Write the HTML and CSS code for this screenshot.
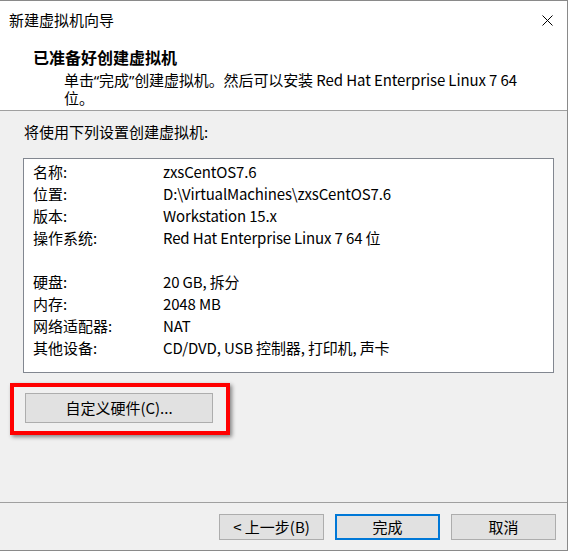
FILE: index.html
```html
<!DOCTYPE html>
<html lang="zh-CN">
<head>
<meta charset="utf-8">
<title>新建虚拟机向导</title>
<link rel="stylesheet" href="styles.css">
</head>
<body>
<div class="window">
  <div class="titlebar">
    <span class="title">新建虚拟机向导</span>
    <svg class="close" width="11" height="11" viewBox="0 0 11 11"><path d="M0.5 0.5 L10.5 10.5 M10.5 0.5 L0.5 10.5" stroke="#000" stroke-width="1" fill="none"/></svg>
  </div>
  <div class="header">
    <div class="heading">已准备好创建虚拟机</div>
    <div class="subtitle">单击<span class="q">“</span>完成<span class="q">”</span>创建虚拟机。然后可以安装 Red Hat Enterprise Linux 7 64<br>位。</div>
  </div>
  <div class="body">
    <div class="intro">将使用下列设置创建虚拟机:</div>
    <div class="listbox">
      <div class="row"><span class="label">名称:</span><span class="value">zxsCentOS7.6</span></div>
      <div class="row"><span class="label">位置:</span><span class="value">D:\VirtualMachines\zxsCentOS7.6</span></div>
      <div class="row"><span class="label">版本:</span><span class="value">Workstation 15.x</span></div>
      <div class="row"><span class="label">操作系统:</span><span class="value">Red Hat Enterprise Linux 7 64 位</span></div>
      <div class="row"><span class="label">&nbsp;</span><span class="value"></span></div>
      <div class="row"><span class="label">硬盘:</span><span class="value">20 GB, 拆分</span></div>
      <div class="row"><span class="label">内存:</span><span class="value">2048 MB</span></div>
      <div class="row"><span class="label">网络适配器:</span><span class="value">NAT</span></div>
      <div class="row"><span class="label">其他设备:</span><span class="value">CD/DVD, USB 控制器, 打印机, 声卡</span></div>
    </div>
    <div class="highlight">
      <button class="btn custom">自定义硬件(C)...</button>
    </div>
  </div>
  <div class="footer">
    <button class="btn">&lt; 上一步(B)</button>
    <button class="btn primary">完成</button>
    <button class="btn">取消</button>
  </div>
</div>
</body>
</html>
```
FILE: styles.css
```css
html, body {
  margin: 0;
  padding: 0;
  background: #ffffff;
}
body {
  width: 569px;
  height: 552px;
  overflow: hidden;
  font-family: "Noto Sans CJK SC", sans-serif;
  font-size: 15px;
  color: #000;
}
.window {
  box-sizing: border-box;
  width: 568px;
  height: 551px;
  border-top: 1px solid #8a8a8a;
  border-right: 1px solid #8a8a8a;
  border-bottom: 1px solid #8a8a8a;
  background: #f0f0f0;
  display: flex;
  flex-direction: column;
}
.titlebar {
  height: 37px;
  background: #fff;
  display: flex;
  align-items: center;
  justify-content: space-between;
  padding-left: 9px;
  padding-right: 14px;
}
.title {
  line-height: 20px;
}
.close {
  display: block;
  margin-top: 1px;
}
.header {
  background: #fff;
  border-bottom: 1px solid #a0a0a0;
  padding-top: 9px;
  box-sizing: border-box;
  height: 73px;
}
.heading {
  font-weight: bold;
  font-size: 16px;
  line-height: 20px;
  padding-left: 33px;
}
.subtitle {
  margin-top: 4px;
  padding-left: 64px;
  line-height: 18px;
  letter-spacing: -0.1px;
}
.q {
  font-family: "Noto Sans", sans-serif;
}
.body {
  flex: 1;
  padding-top: 11px;
}
.intro {
  padding-left: 24px;
  line-height: 20px;
}
.listbox {
  box-sizing: border-box;
  margin-top: 16px;
  margin-left: 23px;
  width: 531px;
  height: 215px;
  background: #fff;
  border: 1px solid #828790;
  padding: 2px 9px 13px 9px;
}
.row {
  display: flex;
  line-height: 22px;
  height: 22px;
  white-space: nowrap;
}
.label {
  width: 130px;
  flex: none;
}
.value {
  letter-spacing: -0.15px;
}
.highlight {
  margin-top: 10px;
  margin-left: 10px;
  width: 220px;
  height: 52px;
  box-sizing: border-box;
  border: 4px solid #ff0000;
  padding: 6px 0 0 11px;
  box-shadow: 2px 2px 4px rgba(0, 0, 0, 0.45);
}
.btn {
  box-sizing: border-box;
  font-family: inherit;
  font-size: 15px;
  color: #000;
  background: #e1e1e1;
  border: 1px solid #adadad;
  padding: 0;
  margin: 0;
  width: 105px;
  height: 26px;
  line-height: 20px;
}
.btn.custom {
  width: 188px;
  height: 30px;
  display: block;
}
.btn.primary {
  border: 2px solid #0078d7;
}
.footer {
  border-top: 1px solid #a0a0a0;
  display: flex;
  justify-content: flex-end;
  gap: 11px;
  padding: 11px 11px 0 0;
  height: 48px;
  box-sizing: border-box;
}
```
